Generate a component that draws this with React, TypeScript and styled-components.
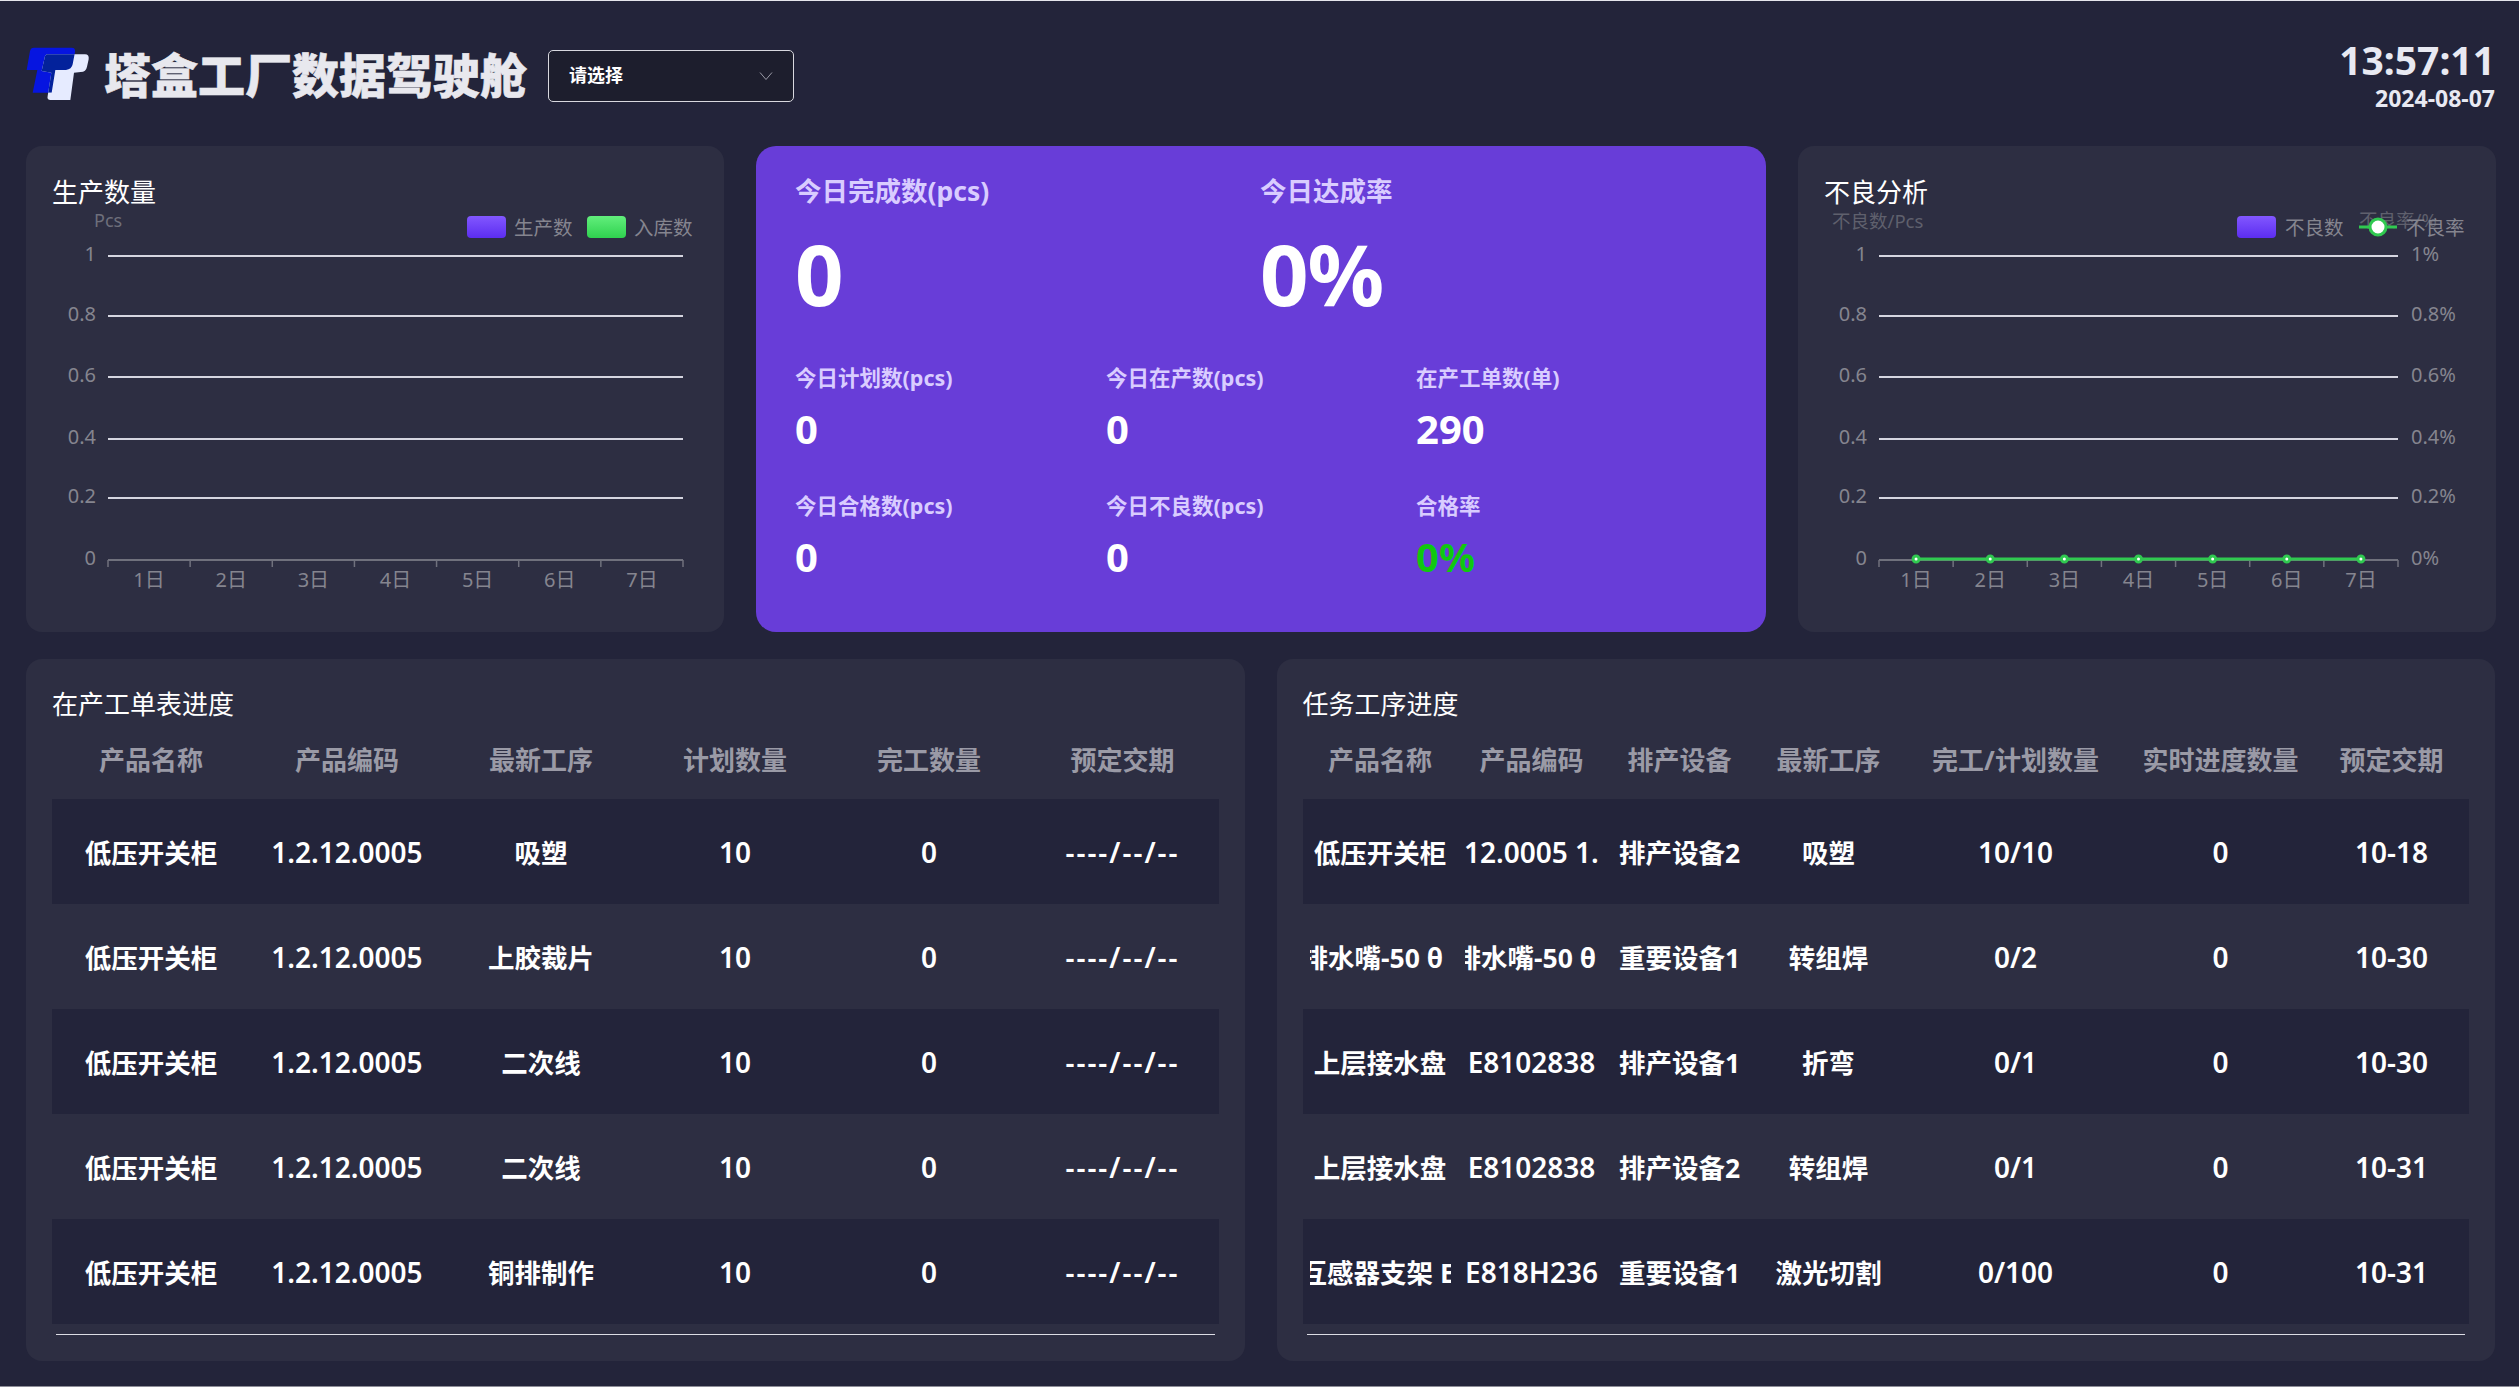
import React from "react";
import styled, { createGlobalStyle } from "styled-components";

const FONT = `"Noto Sans", "Noto Sans CJK SC", sans-serif`;

const GlobalStyle = createGlobalStyle`
  html, body {
    margin: 0;
    padding: 0;
    background: #23243a;
    overflow: hidden;
  }
`;

const Page = styled.div`
  box-sizing: border-box;
  width: 2519px;
  height: 1387px;
  padding: 0 24px 25px 26px;
  display: flex;
  flex-direction: column;
  background: #23243a;
  border-top: 1px solid #e6e6ec;
  border-bottom: 1px solid #8d8d98;
  font-family: ${FONT};
  color: #fff;
`;

const Header = styled.header`
  height: 145px;
  padding-top: 6px;
  box-sizing: border-box;
  display: flex;
  align-items: center;
`;

const Logo = styled.svg`
  width: 65px;
  height: 55px;
  margin: -6px 14px 0 -1px;
  flex: none;
`;

const AppTitle = styled.h1`
  margin: -4px 21px 0 0;
  font-size: 47px;
  line-height: 60px;
  font-weight: 900;
  color: #e8e8ee;
  white-space: nowrap;
  -webkit-text-stroke: 0.6px #e8e8ee;
`;

const SelectBox = styled.div`
  box-sizing: border-box;
  width: 246px;
  height: 52px;
  margin-top: -1px;
  padding: 0 20px;
  display: flex;
  align-items: center;
  justify-content: space-between;
  background: #1d1e2d;
  border: 1px solid #d8d8df;
  border-radius: 5px;
  font-size: 18px;
  line-height: 44px;
  font-weight: 700;
`;

const SelectText = styled.span`
  margin-top: -3px;
`;

const Clock = styled.div`
  margin-left: auto;
  margin-top: -4px;
  text-align: right;
`;

const ClockTime = styled.div`
  font-size: 39px;
  line-height: 46px;
  font-weight: 700;
  color: #e8e9f2;
`;

const ClockDate = styled.div`
  font-size: 23px;
  line-height: 30px;
  font-weight: 700;
  color: #e8e9f2;
`;

const TopRow = styled.section`
  display: flex;
  gap: 32px;
  height: 486px;
`;

const BottomRow = styled.section`
  display: flex;
  gap: 32px;
  flex: 1;
  margin-top: 27px;
`;

const Card = styled.div`
  flex: 1;
  min-width: 0;
  background: #2d2e42;
  border-radius: 16px;
`;

const ChartCard = styled(Card)`
  flex: none;
  width: 698px;
  padding-top: 30px;
  box-sizing: border-box;
`;

const CardTitle = styled.h2`
  margin: 0;
  padding-left: 26px;
  font-size: 26px;
  line-height: 32px;
  font-weight: 400;
  color: #fff;
`;

const ChartSvg = styled.svg`
  display: block;
  width: 698px;
  height: 424px;
  font-family: ${FONT};
`;

const SummaryCard = styled.div`
  flex: none;
  width: 1010px;
  box-sizing: border-box;
  padding: 28px 39px 0;
  background: #683dd8;
  border-radius: 20px;
`;

const SummaryTop = styled.div`
  display: grid;
  grid-template-columns: 465px 465px;
`;

const SummaryGrid = styled.div`
  display: grid;
  grid-template-columns: 311px 310px 310px;
  row-gap: 37px;
  margin-top: 40px;
`;

const BigLabel = styled.div`
  font-size: 26.5px;
  line-height: 34px;
  font-weight: 700;
  color: #d9ccff;
`;

const BigValue = styled.div`
  margin-top: 15px;
  font-size: 85px;
  line-height: 100px;
  font-weight: 700;
  letter-spacing: -1px;
`;

const SmallLabel = styled.div`
  font-size: 21.5px;
  line-height: 30px;
  font-weight: 700;
  color: #d9ccff;
`;

const SmallValue = styled.div<{ $good?: boolean }>`
  margin-top: 11px;
  font-size: 40px;
  line-height: 50px;
  font-weight: 700;
  color: ${(p) => (p.$good ? "#10c810" : "#fff")};
`;

const TableCard = styled(Card)`
  padding: 29px 26px 0;
  box-sizing: border-box;
`;

const TableTitle = styled(CardTitle)`
  padding-left: 0;
`;

const HeadRow = styled.div<{ $cols: string }>`
  display: grid;
  grid-template-columns: ${(p) => p.$cols};
  height: 76px;
  margin: 1px 0 2px;
  align-items: center;
  text-align: center;
  font-size: 26px;
  font-weight: 700;
  color: #9a9aa6;
`;

const Row = styled.div<{ $cols: string; $dark: boolean }>`
  display: grid;
  grid-template-columns: ${(p) => p.$cols};
  height: 105px;
  align-items: center;
  text-align: center;
  background: ${(p) => (p.$dark ? "#23243a" : "transparent")};
`;

type CellKind = "cjk" | "latin" | "dash";

const Cell = styled.div<{ $kind: CellKind }>`
  margin: 0 7px;
  overflow: hidden;
  white-space: nowrap;
  font-size: ${(p) => (p.$kind === "cjk" ? "26.5px" : "28px")};
  font-weight: ${(p) => (p.$kind === "cjk" ? 700 : 600)};
  letter-spacing: ${(p) => (p.$kind === "dash" ? "2px" : "0")};
`;

const Scrolled = styled.div<{ $shift: number }>`
  width: max-content;
  transform: translateX(${(p) => -p.$shift}px);
`;

const TableEnd = styled.div`
  height: 1px;
  margin: 10px 4px 0;
  background: #dcdce4;
`;

type CellValue = string | { text: string; shift: number };

const cellText = (c: CellValue) => (typeof c === "string" ? c : c.text);

const kindOf = (text: string): CellKind => {
  if (text.startsWith("----")) return "dash";
  return /^[\x00-\x7f]+$/.test(text) ? "latin" : "cjk";
};

const LEFT_COLS = "198px 194px 194px 194px 194px 193px";
const RIGHT_COLS = "155px 148px 148px 150px 224px 186px 156px";

const leftHead = ["产品名称", "产品编码", "最新工序", "计划数量", "完工数量", "预定交期"];
const leftRows: CellValue[][] = ["吸塑", "上胶裁片", "二次线", "二次线", "铜排制作"].map((step) => [
  "低压开关柜",
  "1.2.12.0005",
  step,
  "10",
  "0",
  "----/--/--",
]);

const rightHead = ["产品名称", "产品编码", "排产设备", "最新工序", "完工/计划数量", "实时进度数量", "预定交期"];
const rightRows: CellValue[][] = [
  ["低压开关柜", { text: "1.2.12.0005 1.2.12.0005", shift: 48 }, "排产设备2", "吸塑", "10/10", "0", "10-18"],
  [
    { text: "排水嘴-50 θ", shift: 8 },
    { text: "排水嘴-50 θ", shift: 10 },
    "重要设备1",
    "转组焊",
    "0/2",
    "0",
    "10-30",
  ],
  ["上层接水盘", "E8102838", "排产设备1", "折弯", "0/1", "0", "10-30"],
  ["上层接水盘", "E8102838", "排产设备2", "转组焊", "0/1", "0", "10-31"],
  [{ text: "互感器支架 E818H236", shift: 9 }, "E818H236", "重要设备1", "激光切割", "0/100", "0", "10-31"],
];

const GRID_Y = [48, 108, 169, 231, 290, 352];
const Y_LABELS = ["1", "0.8", "0.6", "0.4", "0.2", "0"];
const DAYS = ["1日", "2日", "3日", "4日", "5日", "6日", "7日"];

const AXIS = "#70717d";
const LABEL = "#85858f";

// shared bits of both charts, coordinates are inside the svg
const Axes: React.FC<{ left: number; right: number }> = ({ left, right }) => {
  const band = (right - left) / 7;
  return (
    <>
      {GRID_Y.slice(0, 5).map((y) => (
        <line key={y} x1={left} x2={right} y1={y} y2={y} stroke="#d5d5e0" strokeWidth={2} />
      ))}
      <line x1={left} x2={right} y1={352} y2={352} stroke={AXIS} strokeWidth={2} />
      {Array.from({ length: 8 }, (_, i) => (
        <line
          key={i}
          x1={left + band * i}
          x2={left + band * i}
          y1={352}
          y2={359}
          stroke={AXIS}
          strokeWidth={1.5}
        />
      ))}
      {Y_LABELS.map((t, i) => (
        <text
          key={t}
          x={left - 12}
          y={GRID_Y[i] - 3}
          textAnchor="end"
          dominantBaseline="central"
          fontSize={20}
          fill={LABEL}
        >
          {t}
        </text>
      ))}
      {DAYS.map((d, i) => (
        <text
          key={d}
          x={left + band * (i + 0.5)}
          y={371}
          textAnchor="middle"
          dominantBaseline="central"
          fontSize={20}
          fill={LABEL}
        >
          {d}
        </text>
      ))}
    </>
  );
};

const Swatch: React.FC<{ x: number; fill: string }> = ({ x, fill }) => (
  <rect x={x} y={8} width={39} height={22} rx={4} fill={`url(#${fill})`} />
);

const LegendText: React.FC<{ x: number; children: React.ReactNode }> = ({ x, children }) => (
  <text x={x} y={19} dominantBaseline="central" fontSize={19.5} fill={LABEL}>
    {children}
  </text>
);

const Gradients: React.FC = () => (
  <defs>
    <linearGradient id="purpleFill" x1="0" y1="0" x2="0" y2="1">
      <stop offset="0" stopColor="#8257ff" />
      <stop offset="1" stopColor="#5c2df0" />
    </linearGradient>
    <linearGradient id="greenFill" x1="0" y1="0" x2="0" y2="1">
      <stop offset="0" stopColor="#62ee7c" />
      <stop offset="1" stopColor="#2fd24f" />
    </linearGradient>
  </defs>
);

const ProductionChart: React.FC = () => (
  <ChartSvg viewBox="0 0 698 424">
    <Gradients />
    <text x={68} y={12} dominantBaseline="central" fontSize={18} fill="#6e6f7b">
      Pcs
    </text>
    <Swatch x={441} fill="purpleFill" />
    <LegendText x={488}>生产数</LegendText>
    <Swatch x={561} fill="greenFill" />
    <LegendText x={608}>入库数</LegendText>
    <Axes left={82} right={657} />
  </ChartSvg>
);

const DefectChart: React.FC = () => {
  const left = 81;
  const right = 600;
  const band = (right - left) / 7;
  const points = DAYS.map((_, i) => left + band * (i + 0.5));
  return (
    <ChartSvg viewBox="0 0 698 424">
      <Gradients />
      <text x={34} y={12} dominantBaseline="central" fontSize={18.5} fill="#5f606d">
        不良数/Pcs
      </text>
      <text x={561} y={11} dominantBaseline="central" fontSize={18.5} fill="#5f606d">
        不良率/%
      </text>
      <Swatch x={439} fill="purpleFill" />
      <LegendText x={487}>不良数</LegendText>
      <line x1={561} x2={599} y1={19} y2={19} stroke="#30c950" strokeWidth={3} />
      <circle cx={580} cy={19} r={8} fill="#fff" stroke="#30c950" strokeWidth={3} />
      <LegendText x={608}>不良率</LegendText>
      <Axes left={left} right={right} />
      {["1%", "0.8%", "0.6%", "0.4%", "0.2%", "0%"].map((t, i) => (
        <text key={t} x={613} y={GRID_Y[i] - 3} dominantBaseline="central" fontSize={20} fill={LABEL}>
          {t}
        </text>
      ))}
      <line x1={points[0]} x2={points[6]} y1={351} y2={351} stroke="#30c950" strokeWidth={3} />
      {points.map((x) => (
        <circle key={x} cx={x} cy={351} r={3} fill="#fff" stroke="#30c950" strokeWidth={3} />
      ))}
    </ChartSvg>
  );
};

const BrandLogo: React.FC = () => (
  <Logo viewBox="45 50 195 165">
    <defs>
      <clipPath id="blueT">
        <path d="M72 55L185 55Q197 55 195 68L188 105Q185 120 168 122L136 122L125 190L68 190L82 122L50 122L60 65Q62 55 72 55Z" />
      </clipPath>
    </defs>
    <path
      d="M72 55L185 55Q197 55 195 68L188 105Q185 120 168 122L136 122L125 190L68 190L82 122L50 122L60 65Q62 55 72 55Z"
      fill="#0615e0"
    />
    <path
      d="M110 75L225 75Q238 75 236 90L231 112Q228 128 212 128L192 130L181 212L122 212Q110 212 113 200L124 130L95 125L105 80Z"
      fill="#e6ebff"
    />
    <path
      d="M110 75L225 75Q238 75 236 90L231 112Q228 128 212 128L192 130L181 212L122 212Q110 212 113 200L124 130L95 125L105 80Z"
      fill="#03229b"
      clipPath="url(#blueT)"
    />
  </Logo>
);

const ChevronIcon: React.FC = () => (
  <svg width="14" height="10" viewBox="0 0 14 10" fill="none">
    <path d="M1 1.5L7 8.5L13 1.5" stroke="#9a9aa6" strokeWidth="1" />
  </svg>
);

const ProgressTable: React.FC<{
  title: string;
  cols: string;
  head: string[];
  rows: CellValue[][];
}> = ({ title, cols, head, rows }) => (
  <TableCard>
    <TableTitle>{title}</TableTitle>
    <HeadRow $cols={cols}>
      {head.map((h) => (
        <div key={h}>{h}</div>
      ))}
    </HeadRow>
    {rows.map((row, r) => (
      <Row key={r} $cols={cols} $dark={r % 2 === 0}>
        {row.map((c, i) => (
          <Cell key={i} $kind={kindOf(cellText(c))}>
            {typeof c === "string" ? c : <Scrolled $shift={c.shift}>{c.text}</Scrolled>}
          </Cell>
        ))}
      </Row>
    ))}
    <TableEnd />
  </TableCard>
);

const summary = [
  { label: "今日计划数(pcs)", value: "0" },
  { label: "今日在产数(pcs)", value: "0" },
  { label: "在产工单数(单)", value: "290" },
  { label: "今日合格数(pcs)", value: "0" },
  { label: "今日不良数(pcs)", value: "0" },
  { label: "合格率", value: "0%", good: true },
];

const App: React.FC = () => (
  <Page>
    <GlobalStyle />
    <Header>
      <BrandLogo />
      <AppTitle>塔盒工厂数据驾驶舱</AppTitle>
      <SelectBox>
        <SelectText>请选择</SelectText>
        <ChevronIcon />
      </SelectBox>
      <Clock>
        <ClockTime>13:57:11</ClockTime>
        <ClockDate>2024-08-07</ClockDate>
      </Clock>
    </Header>
    <TopRow>
      <ChartCard>
        <CardTitle>生产数量</CardTitle>
        <ProductionChart />
      </ChartCard>
      <SummaryCard>
        <SummaryTop>
          <div>
            <BigLabel>今日完成数(pcs)</BigLabel>
            <BigValue>0</BigValue>
          </div>
          <div>
            <BigLabel>今日达成率</BigLabel>
            <BigValue>0%</BigValue>
          </div>
        </SummaryTop>
        <SummaryGrid>
          {summary.map((s) => (
            <div key={s.label}>
              <SmallLabel>{s.label}</SmallLabel>
              <SmallValue $good={s.good}>{s.value}</SmallValue>
            </div>
          ))}
        </SummaryGrid>
      </SummaryCard>
      <ChartCard>
        <CardTitle>不良分析</CardTitle>
        <DefectChart />
      </ChartCard>
    </TopRow>
    <BottomRow>
      <ProgressTable title="在产工单表进度" cols={LEFT_COLS} head={leftHead} rows={leftRows} />
      <ProgressTable title="任务工序进度" cols={RIGHT_COLS} head={rightHead} rows={rightRows} />
    </BottomRow>
  </Page>
);

export default App;
